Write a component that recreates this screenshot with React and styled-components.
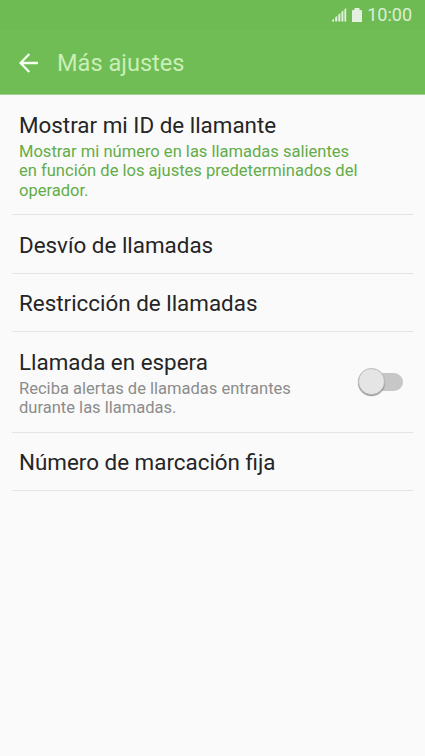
import React from 'react';
import styled, { createGlobalStyle } from 'styled-components';

const Global = createGlobalStyle`
  *{box-sizing:border-box}
  body{margin:0;background:#fafafa;font-family:Roboto,sans-serif}
`;
const Screen = styled.main`
  width:425px;height:756px;background:#fafafa;overflow:hidden;
`;
const Header = styled.header`
  height:95px;background:#70bd55;border-bottom:1px solid #a3cf93;
`;
const StatusBar = styled.div`
  height:30px;padding:0 13px 0 0;display:flex;justify-content:flex-end;align-items:center;
  background:#6ebb53;color:#dcefd4;font-size:18px;line-height:30px;
`;
const StatusIcon = styled.svg`
  flex:none;margin-right:5px;fill:#e4f0df;
`;
const TitleBar = styled.div`
  height:65px;display:flex;align-items:center;padding-left:19px;gap:18px;
`;
const Title = styled.h1`
  margin:0;font-size:23.6px;line-height:28px;font-weight:400;color:#c9efb7;
`;
const List = styled.ul`
  list-style:none;margin:0;padding:0 12px;
`;
const Row = styled.li`
  height:${p => p.$height}px;padding:3px 10px 0 7px;border-bottom:1px solid #e4e4e4;
  display:flex;align-items:center;justify-content:space-between;
`;
const Label = styled.div`
  font-size:22.4px;line-height:27px;color:#252525;white-space:nowrap;
`;
const Detail = styled.div`
  margin-top:3px;font-size:16.55px;line-height:19.4px;white-space:pre;
  color:${p => p.$accent ? '#62ad48' : '#8c8c8c'};
`;
const Track = styled.div`
  width:44px;height:18px;margin-top:-3px;border-radius:9px;background:#c7c7c7;
  display:flex;align-items:center;
`;
const Knob = styled.div`
  width:27px;height:27px;flex:none;border-radius:50%;background:#e5e5e5;
  border:1px solid #bcbcbc;box-shadow:0 1px 1px #8c8c8c;margin-left:-1px;
`;

const rows = [
  { label: 'Mostrar mi ID de llamante', detail: 'Mostrar mi número en las llamadas salientes\nen función de los ajustes predeterminados del\noperador.', accent: true, height: 120 },
  { label: 'Desvío de llamadas', height: 58.5 },
  { label: 'Restricción de llamadas', height: 58.5 },
  { label: 'Llamada en espera', detail: 'Reciba alertas de llamadas entrantes\ndurante las llamadas.', toggle: true, height: 100.5 },
  { label: 'Número de marcación fija', height: 58.5 },
];

export default function App() {
  return (
    <Screen>
      <Global />
      <Header>
        <StatusBar>
          <StatusIcon width="15" height="14" viewBox="0 0 15 14"><path d="M0 13.5V12.4L2 10.6V13.5ZM3.2 13.5V9.6L5.2 7.8V13.5ZM6.3 13.5V6.8L8.3 5V13.5ZM9.4 13.5V4L11.4 2.2V13.5ZM12.4 13.5V1.6L14.2 0V13.5Z" /></StatusIcon>
          <StatusIcon width="10" height="15" viewBox="0 0 10 15"><path d="M2.5 0h5v2H9q1 0 1 1v11H0V3q0-1 1-1h1.5z" /></StatusIcon>
          <span>10:00</span>
        </StatusBar>
        <TitleBar>
          <svg width="20" height="20" viewBox="0 0 20 20" fill="none" stroke="#f5fff0" strokeWidth="2.3"><path d="M19 10H2M10.3 1L1.5 10L10.3 19" /></svg>
          <Title>Más ajustes</Title>
        </TitleBar>
      </Header>
      <List>
        {rows.map(r => (
          <Row key={r.label} $height={r.height}>
            <div>
              <Label>{r.label}</Label>
              {r.detail && <Detail $accent={r.accent}>{r.detail}</Detail>}
            </div>
            {r.toggle && <Track role="switch" aria-checked="false" aria-label={r.label}><Knob /></Track>}
          </Row>
        ))}
      </List>
    </Screen>
  );
}
